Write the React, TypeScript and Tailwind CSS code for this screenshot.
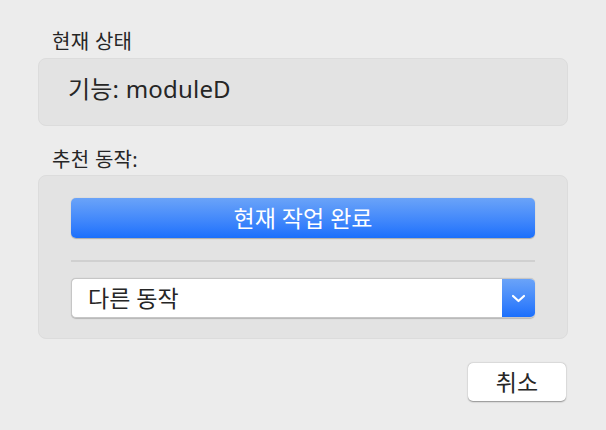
const font = { fontFamily: '"Noto Sans", "Noto Sans CJK KR", sans-serif' };

export default function App() {
  return (
    <div style={font} className="w-[606px] h-[430px] bg-[#ececec] text-[#262626] px-[38px] pt-[30px] flex flex-col">
      <div className="pl-[14px] text-[20px] leading-[24px] h-[24px] tracking-[0.3px]">현재 상태</div>
      <div className="mt-[4px] h-[68px] rounded-[8px] border border-[#dcdcdc] bg-[#e3e3e3] flex items-center px-[29px]">
        <span className="text-[24px] leading-[30px] pb-[7px] tracking-[0.2px]">기능: moduleD</span>
      </div>
      <div className="mt-[22px] pl-[14px] text-[20px] leading-[24px] h-[24px] tracking-[0.3px]">추천 동작:</div>
      <div className="mt-[3px] h-[164px] rounded-[8px] border border-[#dcdcdc] bg-[#e3e3e3] px-[32px] pt-[22px] flex flex-col">
        <button className="h-[40px] rounded-[5px] bg-gradient-to-b from-[#6aa3f8] to-[#1a6ffc] text-white text-[23px] leading-[28px] shadow-[0_0.5px_1px_rgba(0,0,0,0.25)]">
          현재 작업 완료
        </button>
        <div className="mt-[22px] h-[2px] bg-[#d0d0d0]" />
        <div className="mt-[16px] h-[40px] flex rounded-[5px] overflow-hidden border border-[#c6c6c6] border-r-0 shadow-[0_0.5px_1px_rgba(0,0,0,0.2)] bg-white">
          <div className="flex-1 flex items-center pl-[16px] text-[23px] leading-[28px]">다른 동작</div>
          <div className="w-[33px] bg-gradient-to-b from-[#6aa3f8] to-[#1a6ffc] flex items-center justify-center">
            <svg width="15" height="9" viewBox="0 0 15 9" fill="none">
              <path d="M2 2 L7.5 7 L13 2" stroke="white" strokeWidth="2.2" strokeLinecap="round" strokeLinejoin="round" />
            </svg>
          </div>
        </div>
      </div>
      <div className="mt-[24px] flex justify-end pr-[2px]">
        <button className="w-[98px] h-[38px] rounded-[5px] bg-white text-[23px] leading-[28px] shadow-[0_0.5px_1.5px_rgba(0,0,0,0.4)]">
          취소
        </button>
      </div>
    </div>
  );
}
